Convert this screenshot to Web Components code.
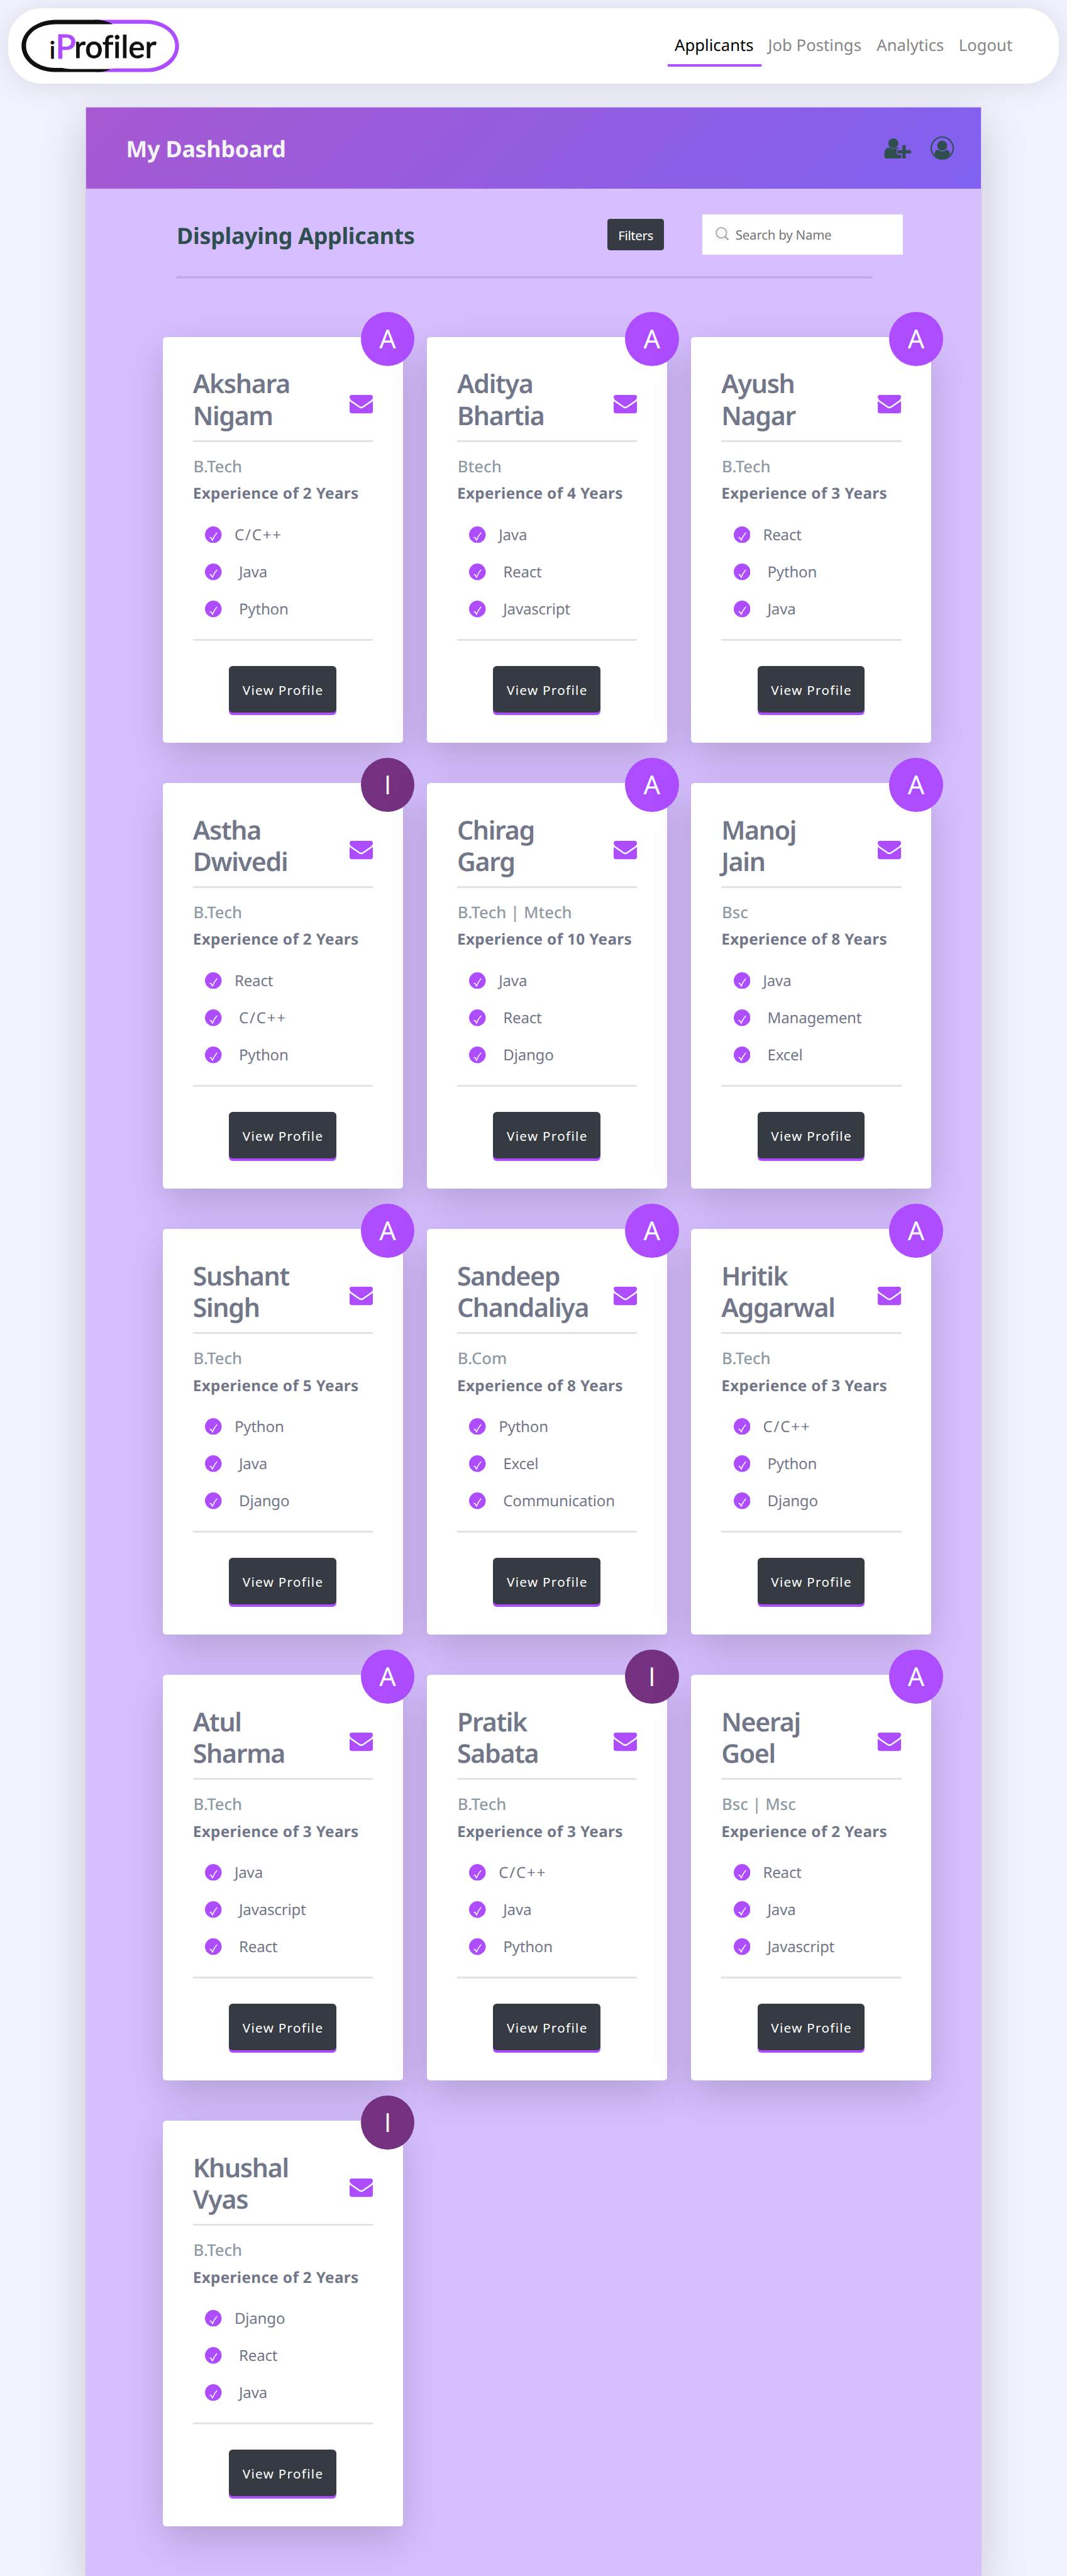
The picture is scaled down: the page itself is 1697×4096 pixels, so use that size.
<!DOCTYPE html>
<html lang="en">
<head>
<meta charset="utf-8">
<title>iProfiler</title>
<style>
html, body { margin: 0; background: #f2f2ff; }
body { height: 4096px; overflow: hidden; font-family: "Noto Sans", "Open Sans", sans-serif; text-rendering: geometricPrecision; }
</style>
</head>
<body>
<profiler-app></profiler-app>

<template id="t-app">
<style>
:host { display: flex; flex-direction: column; zoom: .88385; width: 1920px; height: 4634.2px; overflow: hidden; box-sizing: border-box; padding: 15px 0 0; background: #f2f2ff; }
top-nav { margin: 0 15px; }
dash-panel { margin: 42px 154px 0; flex: 1; }
</style>
<top-nav></top-nav>
<dash-panel heading="My Dashboard"></dash-panel>
</template>

<template id="t-nav">
<style>
:host { display: flex; align-items: center; justify-content: space-between; height: 135px; box-sizing: border-box; padding: 0 72px 0 24px; border-radius: 60px; background: #fff; box-shadow: 0 4px 48px rgba(0,0,0,.1); }
nav { display: flex; padding-top: 1px; }
</style>
<brand-logo></brand-logo>
<nav>
<nav-link active style="width:168px">Applicants</nav-link>
<nav-link style="width:195.5px">Job Postings</nav-link>
<nav-link style="width:147.5px">Analytics</nav-link>
<nav-link style="width:120px">Logout</nav-link>
</nav>
</template>

<template id="t-link">
<style>
:host { display: block; box-sizing: border-box; height: 104px; padding: 28px 12px 0; font-size: 29px; line-height: 45px; letter-spacing: .05px; color: #858585; white-space: nowrap; }
span { display: block; }
:host([active]) { color: #000; }
i { display: none; height: 4px; margin: 12px -12px 0; background: #ae4dff; }
:host([active]) i { display: block; }
</style>
<span><slot></slot></span><i></i>
</template>

<template id="t-logo">
<style>
:host { display: block; width: 284px; height: 95px; }
svg { display: block; overflow: visible; }
text { font-variant-ligatures: none; }
</style>
<svg width="284" height="95" viewBox="39 36.5 284 95">
<defs><pattern id="d" x="63" y="52" width="20.4" height="20.4" patternUnits="userSpaceOnUse"><circle cx="1" cy="1" r=".7" fill="#ddd"/></pattern></defs>
<rect x="62" y="52" width="230" height="64" fill="url(#d)"/>
<path d="M170 37H262C296 37 322.7 57 322.7 84S296 131 268 131H170L205 124.5H262C292 124.5 315.7 107 315.7 84S292 44 262 44H180Z" fill="#ae4dff"/>
<path d="M99 37H178Q192 38.500 204 45H102C70 45 47.400 61 47.400 84S72 123.500 99 123.500H112Q120 125.500 128 125.500H200Q190 130.500 178 131H97C62 129.500 39.300 108 39.300 84S63 38.500 99 37Z" fill="#101010"/>
<g font-family="Lato,sans-serif" font-weight="500" fill="#101010" stroke="#101010" stroke-width=".9">
<text x="89.500" y="107" font-size="43">i</text>
<text x="100.500" y="107" font-size="60" fill="#ae4dff" stroke="#ae4dff" textLength="37" lengthAdjust="spacingAndGlyphs">P</text>
<text x="134" y="105.800" font-size="56" textLength="148" lengthAdjust="spacingAndGlyphs">rofiler</text>
</g>
</svg>
</template>

<template id="t-panel">
<style>
:host { display: flex; flex-direction: column; box-sizing: border-box; padding: 2px 1px 0; background: #d7bfff; box-shadow: 0 24px 72px rgba(0,0,0,.18); }
header { display: flex; align-items: center; height: 146px; box-sizing: border-box; padding: 0 48px 0 72px; background: linear-gradient(135deg, #a759d1, #8061f0); }
h1 { margin: 4px auto 0 0; font-size: 40.5px; line-height: 60px; font-weight: 700; letter-spacing: -.25px; color: #f5f5f5; }
.tools { display: flex; align-items: center; height: 72px; margin: 46px 140px 0 163px; }
h2 { margin: 5px auto 0 0; font-size: 40.5px; line-height: 60px; font-weight: 700; letter-spacing: -.28px; color: #2f4f4f; }
button { width: 102px; height: 57px; padding: 2px 0 0; border: 0; border-radius: 5px; background: #363a42; color: #fff; font: 23.3px "Noto Sans", sans-serif; letter-spacing: -.5px; margin: 0 69px 0 0; position: static; }
.search { display: flex; align-items: center; width: 361px; height: 72px; box-sizing: border-box; padding-left: 23px; background: #fff; font-size: 23.3px; letter-spacing: -.32px; color: #757575; }
.search span { padding-top: 2px; }
.search svg { margin: -4px 12.500px 0 0; }
hr { width: 1252px; height: 4px; margin: 39px 0 0 163px; border: 0; background: #c2ace5; }
.grid { display: grid; grid-template-columns: repeat(3, 432px); gap: 72.2px 43.500px; margin: 105px 0 0 138px; }
</style>
<header>
<h1></h1>
<svg width="49" height="40" viewBox="0 0 49 40" fill="#2f4f4f" style="margin:0 35px 0 0"><circle cx="16.700" cy="11.300" r="9"/><path d="M7 19Q10 18 11.200 19.300Q16.700 23 22.200 19.300Q26 18 29.500 20.300H25.500Q22.500 20.300 22.500 23.500V28Q22.500 31.500 26 31.500H31V37.500Q29.500 38.500 27 38.500H5.500Q.5 38.500 .5 33Q.5 21 7 19Z"/><path d="M33 14.500h6v9h9.500v6H39v9h-6v-9h-9v-6h9z"/></svg>
<svg width="42" height="42" viewBox="0 0 42 42"><circle cx="21" cy="21" r="19.800" fill="none" stroke="#2f4f4f" stroke-width="2.400"/><circle cx="21" cy="16.500" r="9" fill="#2f4f4f"/><path d="M13.500 24Q21 30 28.500 24Q34 24 35.300 32Q30 40.500 21 40.500T6.700 32Q8 24 13.500 24Z" fill="#2f4f4f"/></svg>
</header>
<div class="tools">
<h2>Displaying Applicants</h2>
<button>Filters</button>
<div class="search"><svg width="24" height="24" viewBox="0 0 24 24"><rect width="24" height="24" fill="#f8f8f8"/><circle cx="10.500" cy="10.500" r="9.300" fill="#fafafa" stroke="#b0b0b0" stroke-width="2.400"/><path d="M17 17.500L23.500 23.500" stroke="#a8a8a8" stroke-width="2.800"/></svg><span>Search by Name</span></div>
</div>
<hr>
<div class="grid"></div>
</template>

<template id="t-card">
<style>
:host { display: block; position: relative; z-index: 0; box-sizing: border-box; height: 730px; padding: 56.500px 54px 0; border-radius: 6px; background: #fff; box-shadow: 0 24px 72px rgba(0,0,0,.17); color: #717788; }
status-badge { position: absolute; top: -45.300px; right: -21px; }
.top { display: flex; justify-content: space-between; align-items: center; height: 129.800px; box-sizing: border-box; padding-bottom: 15.800px; }
h3 { margin: 0; width: 250px; font-size: 46.500px; line-height: 57px; font-weight: 560; letter-spacing: -1.450px; }
h3 span { display: block; white-space: nowrap; }
.top svg { margin-top: 16px; }
hr { height: 3px; margin: 0; border: 0; background: #e3e3e3; }
.degree { margin-top: 26.500px; padding-left: 1px; font-size: 29px; line-height: 36px; font-weight: 550; letter-spacing: 0; color: #909aa5; }
.exp { margin-top: 12.900px; font-size: 27.500px; line-height: 36px; font-weight: 700; letter-spacing: .400px; white-space: nowrap; }
ul { margin: 21.800px 0 20.500px; padding: 0 0 0 22px; list-style: none; }
button { display: block; width: 193px; height: 84px; margin: 45px 0 0 65px; padding: 2px 0 0 1.600px; border: 0; border-radius: 7px; background: #363a42; box-shadow: 0 4.500px 0 #ae4dff; color: #fff; font: 23.300px "Noto Sans", sans-serif; letter-spacing: 1.500px; }
</style>
<status-badge></status-badge>
<div class="top"><h3></h3>
<svg width="42" height="33" viewBox="0 0 42 33" fill="#ae4dff"><path d="M4 0H38Q42 0 42 4Q42 7 39 9.500L24 20Q21 22 18 20L3 9.500Q0 7 0 4Q0 0 4 0Z"/><path d="M0 11L17 22.500Q21 25.500 25 22.500L42 11V29Q42 33 38 33H4Q0 33 0 29Z"/></svg></div>
<hr>
<div class="degree"></div>
<div class="exp"></div>
<ul></ul>
<hr>
<button>View Profile</button>
</template>

<template id="t-skill">
<style>
:host { display: flex; align-items: center; height: 67px; font-size: 27.300px; line-height: 67px; letter-spacing: -.250px; white-space: pre; }
svg { margin-right: 23px; flex: none; }
span { padding-top: 1px; }
:host([indented]) svg { margin-right: 31px; }
:host([wide]) { letter-spacing: 2px; }
</style>
<svg width="30" height="30" viewBox="0 0 30 30"><circle cx="15" cy="15" r="15" fill="#ae4dff"/><path d="M9.200 20.200Q10.500 19.200 11.300 20.800L13.500 25Q16 17.500 21.300 11.800" fill="none" stroke="#fff" stroke-width="1.700" stroke-linecap="round" stroke-linejoin="round"/></svg><span><slot></slot></span>
</template>

<template id="t-badge">
<style>
:host { display: flex; align-items: center; justify-content: center; width: 97px; height: 98px; border-radius: 50%; background: #ae4dff; color: #fff; font-size: 47px; line-height: 98px; }
:host([kind="I"]) { background: #74317f; }
span { padding-top: 2px; }
:host([kind="I"]) span { font-family: "Open Sans", sans-serif; }
</style>
<span></span>
</template>

<script>
class TemplateElement extends HTMLElement {
  constructor() {
    super();
    this.attachShadow({ mode: 'open' });
    this.shadowRoot.append(document.getElementById(this.constructor.template).content.cloneNode(true));
  }
  $(selector) { return this.shadowRoot.querySelector(selector); }
}
const define = (name, template, base = class extends TemplateElement {}) => {
  base.template = template;
  customElements.define(name, base);
};

const applicants = [
  ['Akshara Nigam', 'B.Tech', 2, 'C/C++,Java,Python', 'A'],
  ['Aditya Bhartia', 'Btech', 4, 'Java,React,Javascript', 'A'],
  ['Ayush Nagar', 'B.Tech', 3, 'React,Python,Java', 'A'],
  ['Astha Dwivedi', 'B.Tech', 2, 'React,C/C++,Python', 'I'],
  ['Chirag Garg', 'B.Tech | Mtech', 10, 'Java,React,Django', 'A'],
  ['Manoj Jain', 'Bsc', 8, 'Java,Management,Excel', 'A'],
  ['Sushant Singh', 'B.Tech', 5, 'Python,Java,Django', 'A'],
  ['Sandeep Chandaliya', 'B.Com', 8, 'Python,Excel,Communication', 'A'],
  ['Hritik Aggarwal', 'B.Tech', 3, 'C/C++,Python,Django', 'A'],
  ['Atul Sharma', 'B.Tech', 3, 'Java,Javascript,React', 'A'],
  ['Pratik Sabata', 'B.Tech', 3, 'C/C++,Java,Python', 'I'],
  ['Neeraj Goel', 'Bsc | Msc', 2, 'React,Java,Javascript', 'A'],
  ['Khushal Vyas', 'B.Tech', 2, 'Django,React,Java', 'I'],
];

define('brand-logo', 't-logo');
define('nav-link', 't-link');
define('top-nav', 't-nav');
define('skill-item', 't-skill');
define('status-badge', 't-badge', class extends TemplateElement {
  static observedAttributes = ['kind'];
  attributeChangedCallback(_, __, value) { this.$('span').textContent = value; }
});
define('applicant-card', 't-card', class extends TemplateElement {
  set applicant([name, degree, years, skills, kind]) {
    this.$('status-badge').setAttribute('kind', kind);
    for (const part of name.split(' ')) {
      const line = document.createElement('span');
      line.textContent = part;
      this.$('h3').append(line);
    }
    this.$('.degree').textContent = degree;
    this.$('.exp').textContent = `Experience of ${years} Years`;
    skills.split(',').forEach((skill, i) => {
      const item = document.createElement('skill-item');
      item.textContent = skill;
      item.toggleAttribute('indented', i > 0);
      item.toggleAttribute('wide', skill === 'C/C++');
      this.$('ul').append(item);
    });
  }
});
define('dash-panel', 't-panel', class extends TemplateElement {
  connectedCallback() {
    this.$('h1').textContent = this.getAttribute('heading');
    for (const a of applicants) {
      const card = document.createElement('applicant-card');
      card.applicant = a;
      this.$('.grid').append(card);
    }
  }
});
define('profiler-app', 't-app');
</script>
</body>
</html>
